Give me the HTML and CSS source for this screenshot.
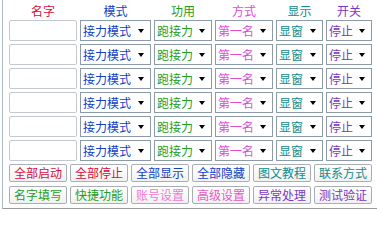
FILE: index.html
```html
<!DOCTYPE html>
<html>
<head>
<meta charset="utf-8">
<link rel="stylesheet" href="styles.css">
</head>
<body>
<div class="frame">
  <div class="grid">
    <div class="hd c-red">名字</div>
    <div class="hd c-blue">模式</div>
    <div class="hd c-green">功用</div>
    <div class="hd c-mag">方式</div>
    <div class="hd c-teal">显示</div>
    <div class="hd c-purple">开关</div>

    <div class="inp"></div>
    <div class="sel c-blue"><span>接力模式</span><i class="arr"></i></div>
    <div class="sel c-green"><span>跑接力</span><i class="arr"></i></div>
    <div class="sel c-mag"><span>第一名</span><i class="arr"></i></div>
    <div class="sel c-teal"><span>显窗</span><i class="arr"></i></div>
    <div class="sel c-purple"><span>停止</span><i class="arr"></i></div>

    <div class="inp"></div>
    <div class="sel c-blue"><span>接力模式</span><i class="arr"></i></div>
    <div class="sel c-green"><span>跑接力</span><i class="arr"></i></div>
    <div class="sel c-mag"><span>第一名</span><i class="arr"></i></div>
    <div class="sel c-teal"><span>显窗</span><i class="arr"></i></div>
    <div class="sel c-purple"><span>停止</span><i class="arr"></i></div>

    <div class="inp"></div>
    <div class="sel c-blue"><span>接力模式</span><i class="arr"></i></div>
    <div class="sel c-green"><span>跑接力</span><i class="arr"></i></div>
    <div class="sel c-mag"><span>第一名</span><i class="arr"></i></div>
    <div class="sel c-teal"><span>显窗</span><i class="arr"></i></div>
    <div class="sel c-purple"><span>停止</span><i class="arr"></i></div>

    <div class="inp"></div>
    <div class="sel c-blue"><span>接力模式</span><i class="arr"></i></div>
    <div class="sel c-green"><span>跑接力</span><i class="arr"></i></div>
    <div class="sel c-mag"><span>第一名</span><i class="arr"></i></div>
    <div class="sel c-teal"><span>显窗</span><i class="arr"></i></div>
    <div class="sel c-purple"><span>停止</span><i class="arr"></i></div>

    <div class="inp"></div>
    <div class="sel c-blue"><span>接力模式</span><i class="arr"></i></div>
    <div class="sel c-green"><span>跑接力</span><i class="arr"></i></div>
    <div class="sel c-mag"><span>第一名</span><i class="arr"></i></div>
    <div class="sel c-teal"><span>显窗</span><i class="arr"></i></div>
    <div class="sel c-purple"><span>停止</span><i class="arr"></i></div>

    <div class="inp"></div>
    <div class="sel c-blue"><span>接力模式</span><i class="arr"></i></div>
    <div class="sel c-green"><span>跑接力</span><i class="arr"></i></div>
    <div class="sel c-mag"><span>第一名</span><i class="arr"></i></div>
    <div class="sel c-teal"><span>显窗</span><i class="arr"></i></div>
    <div class="sel c-purple"><span>停止</span><i class="arr"></i></div>
  </div>

  <div class="btns">
    <div class="btn c-red">全部启动</div>
    <div class="btn c-red">全部停止</div>
    <div class="btn c-blue">全部显示</div>
    <div class="btn c-blue">全部隐藏</div>
    <div class="btn c-teal">图文教程</div>
    <div class="btn c-teal">联系方式</div>
    <div class="btn c-green">名字填写</div>
    <div class="btn c-green">快捷功能</div>
    <div class="btn c-pink">账号设置</div>
    <div class="btn c-mag2">高级设置</div>
    <div class="btn c-purple">异常处理</div>
    <div class="btn c-purple">测试验证</div>
  </div>
</div>
</body>
</html>
```

FILE: styles.css
```css
html, body {
  margin: 0;
  padding: 0;
  background: #ffffff;
}
body {
  width: 377px;
  height: 211px;
  overflow: hidden;
  font-family: "Noto Sans CJK SC", "Noto Sans", sans-serif;
}
.frame {
  margin-left: 2px;
  width: 375px;
  box-sizing: border-box;
  border-left: 1px solid #a9b9cb;
  border-bottom: 1px solid #9a9a9a;
  padding: 0 0 4px 6px;
}
.grid {
  display: grid;
  grid-template-columns: 68px 71px 58px 58px 47px 46px;
  grid-template-rows: 17px repeat(6, 21px);
  column-gap: 3px;
  row-gap: 3px;
}
.hd {
  font-size: 12px;
  line-height: 12px;
  padding-top: 5px;
  text-align: center;
}
.inp {
  box-sizing: border-box;
  border: 1px solid #c4c8cc;
  border-radius: 2px;
  background: #ffffff;
}
.sel {
  box-sizing: border-box;
  border: 1px solid #8d9ba8;
  background: #ffffff;
  display: flex;
  align-items: center;
  justify-content: space-between;
  padding: 0 6px 0 2px;
  font-size: 12px;
  line-height: 19px;
  white-space: nowrap;
}
.arr {
  width: 0;
  height: 0;
  border-left: 3.5px solid transparent;
  border-right: 3.5px solid transparent;
  border-top: 4px solid #000000;
}
.btns {
  margin-top: 3px;
  display: grid;
  grid-template-columns: repeat(6, 58px);
  grid-template-rows: 18px 18px;
  column-gap: 3px;
  row-gap: 4px;
}
.btn {
  box-sizing: border-box;
  border: 1px solid #a9aeb4;
  border-radius: 2px;
  background: linear-gradient(#ffffff, #f1f1f1);
  font-size: 12px;
  line-height: 16px;
  text-align: center;
  white-space: nowrap;
}
.c-red { color: #d3103e; }
.c-blue { color: #1240c8; }
.c-green { color: #1d9e1d; }
.c-mag { color: #e446e0; }
.c-mag2 { color: #e558c8; }
.c-pink { color: #f17ad6; }
.c-teal { color: #128c8c; }
.c-purple { color: #7b36c6; }
```
